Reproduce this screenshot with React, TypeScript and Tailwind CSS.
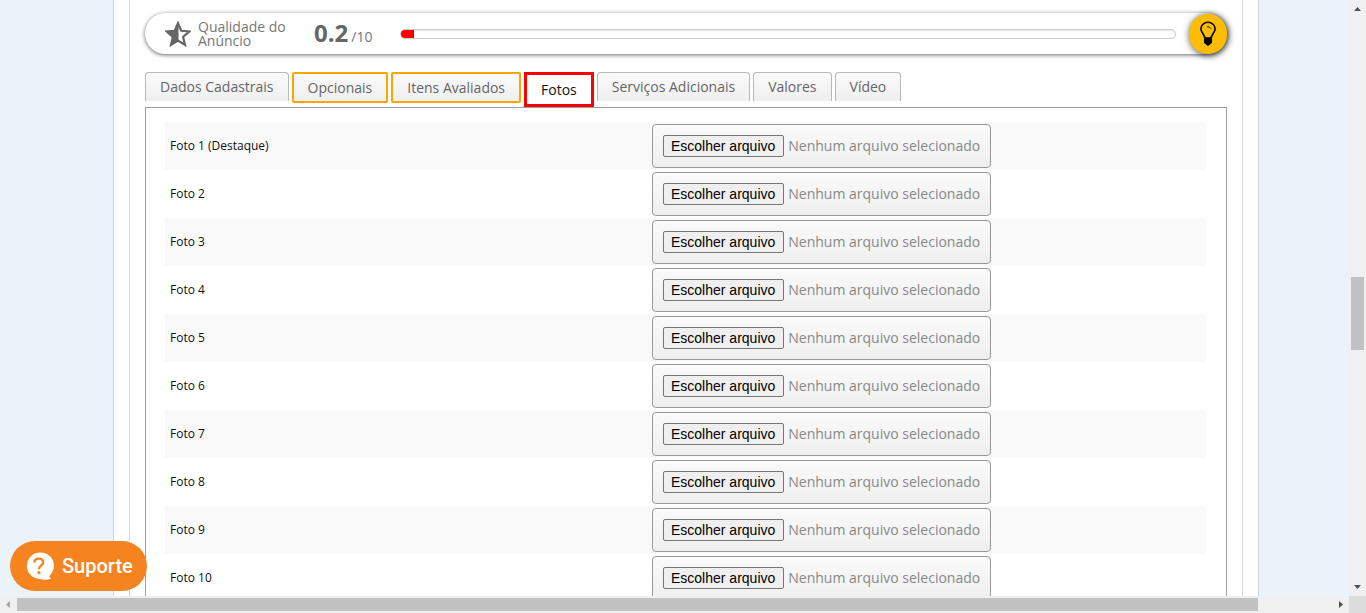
import React from "react";

type TabKind = "plain" | "pending" | "active";

const tabs: { label: string; kind: TabKind }[] = [
  { label: "Dados Cadastrais", kind: "plain" },
  { label: "Opcionais", kind: "pending" },
  { label: "Itens Avaliados", kind: "pending" },
  { label: "Fotos", kind: "active" },
  { label: "Serviços Adicionais", kind: "plain" },
  { label: "Valores", kind: "plain" },
  { label: "Vídeo", kind: "plain" },
];

const tabStyles: Record<TabKind, string> = {
  plain:
    "h-[29px] rounded-t border border-b-0 border-[#b8b8b8] bg-linear-to-b from-[#fafafa] to-[#efefef] px-3.5 text-[#666]",
  pending:
    "h-[31px] rounded-xs border-2 border-[#ffa500] bg-linear-to-b from-[#fafafa] to-[#efefef] px-3.5 text-[#666]",
  active: "h-[35px] border-3 border-[#ff0000] bg-white px-3.5 text-[#111]",
};

const photos = Array.from({ length: 10 }, (_, i) =>
  i === 0 ? "Foto 1 (Destaque)" : `Foto ${i + 1}`
);

function HalfStar() {
  return (
    <svg viewBox="0 0 26 26" className="size-[26px] shrink-0" aria-hidden="true">
      <path
        d="M13 2.2 16.2 9.800 24.200 10.500 18.100 15.800 20 23.900 13 19.600 6 23.900 7.900 15.800 1.800 10.500 9.800 9.800Z"
        fill="#fff"
        stroke="#666"
        strokeWidth="2.200"
      />
      <path d="M13 1 9.500 9.500 1 10.300 7.500 15.800 5.500 24.500 13.500 20V1Z" fill="#666" />
    </svg>
  );
}

function Bulb() {
  return (
    <svg viewBox="0 0 18 25" className="h-[25px] w-[18px]" aria-hidden="true">
      <path
        d="M5.800 17C5.600 13 1.900 11.800 1.900 7.900A7.100 6.600 0 0 1 16.100 7.900C16.100 11.800 12.400 13 12.200 17"
        fill="none"
        stroke="#000"
        strokeWidth="1.600"
      />
      <path d="M8.200 5.900c1.700-.2 3 .4 3.700 1.700" fill="none" stroke="#000" strokeWidth="1" />
      <path d="M5 16.200H13V22L11.200 23 10.300 24.600H7.700L6.800 23 5 22Z" fill="#000" />
    </svg>
  );
}

function SupportIcon() {
  return (
    <svg viewBox="1 0 28 28" className="size-7" aria-hidden="true">
      <path
        d="M13.800.5a13.300 13.300 0 1 0 3 26.700c3.200.9 6.600.7 9.400-.8-1.100-.5-1.700-1.300-1.900-2.500A13.400 13.400 0 0 0 13.800.5Z"
        fill="#fff"
      />
      <path
        d="M9.300 10.600c.2-2.500 1.900-4 4.400-4 2.600 0 4.400 1.500 4.400 3.800 0 3.300-4.200 3.300-4.200 6.800"
        fill="none"
        stroke="#f58320"
        strokeWidth="2.300"
      />
      <circle cx="13.900" cy="20.600" r="1.600" fill="#f58320" />
    </svg>
  );
}

function QualityBar() {
  return (
    <section className="flex h-[41px] items-center rounded-full bg-white pl-5 shadow-[0_1px_4px_rgba(0,0,0,0.6)]">
      <HalfStar />
      <p className="ml-[7px] w-[116px] text-sm leading-3.5 text-[#777]">
        Qualidade do
        <br />
        Anúncio
      </p>
      <p className="flex w-[86px] items-baseline gap-[3px] text-sm text-[#777]">
        <strong className="text-2xl leading-6 font-bold text-[#666]">0.2</strong>
        /10
      </p>
      <div
        role="progressbar"
        aria-label="Qualidade do Anúncio"
        aria-valuenow={0.2}
        aria-valuemin={0}
        aria-valuemax={10}
        className="flex h-2.5 flex-1 overflow-hidden rounded-full border border-[#ccc] bg-white shadow-[inset_0_1px_2px_rgba(0,0,0,0.12)]"
      >
        <div className="-m-px w-3.5 bg-[#ff0000] shadow-[inset_0_0_2px_rgba(0,0,0,0.4)]" />
      </div>
      <button
        type="button"
        aria-label="Dicas"
        className="ml-[13px] flex h-10 w-[38px] items-center justify-center rounded-full bg-[#fdbc05] shadow-[1px_1px_6px_1px_rgba(0,0,0,0.6)]"
      >
        <Bulb />
      </button>
    </section>
  );
}

function PhotoRow({ label, id }: { label: string; id: string }) {
  return (
    <tr className="h-12 odd:bg-[#f9f9f9]">
      <th scope="row" className="w-[487px] pl-[5px] text-left text-xs font-normal text-[#111]">
        <label htmlFor={id}>{label}</label>
      </th>
      <td>
        <label className="relative flex h-11 w-fit items-center gap-1 rounded border border-[#999] bg-linear-to-b from-[#fafafa] to-[#efefef] px-2.5 text-sm text-[#888]">
          <input id={id} type="file" className="sr-only" />
          <span className="flex h-[22px] items-center rounded-xs border border-[#767676] bg-[#efefef] pr-2 pl-[7px] font-['Liberation_Sans',Arial,sans-serif] text-black">
            Escolher arquivo
          </span>
          Nenhum arquivo selecionado
        </label>
      </td>
    </tr>
  );
}

function Arrow({ points }: { points: string }) {
  return (
    <svg viewBox="0 0 17 17" className="size-[17px] shrink-0" aria-hidden="true">
      <polygon points={points} fill="#505050" />
    </svg>
  );
}

export default function App() {
  return (
    <div className="grid h-screen grid-cols-[minmax(0,1fr)_17px] grid-rows-[minmax(0,1fr)_17px] overflow-hidden bg-[#f0f0f0] font-['Open_Sans',sans-serif]">
      <div className="overflow-hidden bg-[#eaf2fa] pr-[90px] pl-[113px]">
        <div className="border-x border-[#d3d7de] bg-white px-[15px]">
          <main className="border-x border-[#d3d7de] px-[15px] pt-[13px]">
            <QualityBar />
            <nav role="tablist" className="mt-[18px] flex items-start gap-[3px]">
              {tabs.map((tab) => (
                <button
                  key={tab.label}
                  type="button"
                  role="tab"
                  aria-selected={tab.kind === "active"}
                  className={`flex shrink-0 items-center text-sm whitespace-nowrap ${tabStyles[tab.kind]}`}
                >
                  {tab.label}
                </button>
              ))}
            </nav>
            <section className="border border-[#a0a0a0] pt-3.5 pr-5 pb-5 pl-[19px]">
              <table className="w-full border-collapse">
                <tbody>
                  {photos.map((label, i) => (
                    <PhotoRow key={label} label={label} id={`foto-${i + 1}`} />
                  ))}
                </tbody>
              </table>
            </section>
          </main>
        </div>
      </div>

      <div className="flex flex-col items-center justify-between" aria-hidden="true">
        <Arrow points="5,11 12,11 8.5,7" />
        <div className="flex w-[13px] flex-1 flex-col">
          <div className="flex-[260]" />
          <div className="h-[73px] bg-[#c1c1c1]" />
          <div className="flex-[229]" />
        </div>
        <Arrow points="5,6 12,6 8.5,10" />
      </div>

      <div className="flex items-center" aria-hidden="true">
        <svg viewBox="0 0 17 17" className="size-[17px] shrink-0">
          <polygon points="10,5 10,12 6,8.500" fill="#a3a3a3" />
        </svg>
        <div className="flex h-[13px] flex-1">
          <div className="flex-[1241] bg-[#c1c1c1]" />
          <div className="flex-[74]" />
        </div>
        <Arrow points="7,5 7,12 11,8.5" />
      </div>
      <div className="bg-[#dcdcdc]" />

      <button
        type="button"
        className="fixed bottom-[22px] left-2.5 flex h-[50px] items-center gap-2 rounded-full bg-[#f58320] pr-3.5 pl-4 font-[Roboto,sans-serif] text-xl font-medium text-white"
      >
        <SupportIcon />
        Suporte
      </button>
    </div>
  );
}
